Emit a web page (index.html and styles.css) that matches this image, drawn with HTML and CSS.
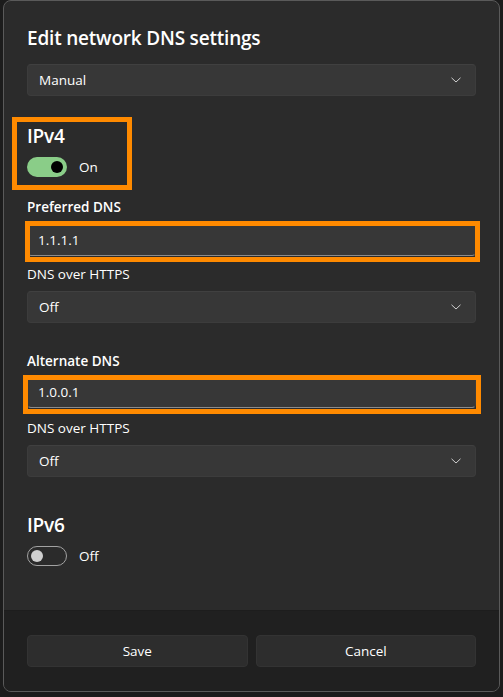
FILE: index.html
```html
<!DOCTYPE html>
<html lang="en">
<head>
<meta charset="utf-8">
<title>Edit network DNS settings</title>
<link rel="stylesheet" href="styles.css">
</head>
<body>
<div class="dialog">
  <div class="content">
    <h1 class="title">Edit network DNS settings</h1>
    <div class="select select-first"><span>Manual</span><svg class="chev" width="10" height="6" viewBox="0 0 10 6"><path d="M0.5 0.8 L5 5 L9.5 0.8" fill="none" stroke="#cfcfcf" stroke-width="1"/></svg></div>

    <h2 class="section section-v4">IPv4</h2>
    <div class="toggle-row"><span class="toggle on"><span class="knob"></span></span><span>On</span></div>

    <div class="label strong l-pref">Preferred DNS</div>
    <div class="input i-pref">1.1.1.1</div>
    <div class="label l-doh1">DNS over HTTPS</div>
    <div class="select s-doh1"><span>Off</span><svg class="chev" width="10" height="6" viewBox="0 0 10 6"><path d="M0.5 0.8 L5 5 L9.5 0.8" fill="none" stroke="#cfcfcf" stroke-width="1"/></svg></div>

    <div class="label strong l-alt">Alternate DNS</div>
    <div class="input i-alt">1.0.0.1</div>
    <div class="label l-doh2">DNS over HTTPS</div>
    <div class="select s-doh2"><span>Off</span><svg class="chev" width="10" height="6" viewBox="0 0 10 6"><path d="M0.5 0.8 L5 5 L9.5 0.8" fill="none" stroke="#cfcfcf" stroke-width="1"/></svg></div>

    <h2 class="section section-v6">IPv6</h2>
    <div class="toggle-row"><span class="toggle off"><span class="knob"></span></span><span>Off</span></div>
  </div>
  <div class="footer">
    <button class="btn">Save</button>
    <button class="btn">Cancel</button>
  </div>
  <div class="mark mark-v4"></div>
  <div class="mark mark-pref"></div>
  <div class="mark mark-alt"></div>
</div>
</body>
</html>
```
FILE: styles.css
```css
html, body {
  margin: 0;
  padding: 0;
}
body {
  width: 503px;
  height: 697px;
  overflow: hidden;
  background: #1c1c1c;
  font-family: "Open Sans", "Noto Sans", sans-serif;
  color: #ffffff;
}
.dialog {
  position: relative;
  box-sizing: border-box;
  margin-left: 3px;
  width: 497px;
  height: 692px;
  border: 1px solid #5a5a5a;
  border-radius: 8px;
  background: #2b2b2b;
  overflow: hidden;
  display: flex;
  flex-direction: column;
}
.content {
  flex: 1;
  padding: 23px 23px 0;
  display: flex;
  flex-direction: column;
}
.title {
  margin: 0;
  font-size: 19px;
  font-weight: 600;
  line-height: 28px;
  letter-spacing: -0.2px;
}
.select {
  box-sizing: border-box;
  height: 32px;
  background: #373737;
  border: 1px solid #3c3c3c;
  border-top-color: #404040;
  border-radius: 4px;
  padding: 0 14px 0 11px;
  display: flex;
  align-items: center;
  justify-content: space-between;
  font-size: 13.5px;
}
.select-first { margin-top: 12px; }
.s-doh1 { margin-top: 7px; }
.s-doh2 { margin-top: 7px; }
.chev { display: block; }
.section {
  margin: 0;
  font-size: 19px;
  font-weight: 600;
  line-height: 28px;
  letter-spacing: -0.2px;
}
.section-v4 { margin-top: 26px; }
.section-v6 { margin-top: 34px; }
.toggle-row {
  margin-top: 7px;
  height: 20px;
  display: flex;
  align-items: center;
  gap: 12px;
  font-size: 13.5px;
}
.toggle {
  box-sizing: border-box;
  width: 40px;
  height: 20px;
  border-radius: 10px;
  display: flex;
  align-items: center;
}
.toggle.on {
  background: #8acd88;
  justify-content: flex-end;
  padding: 0 4px;
}
.toggle.on .knob {
  width: 12px;
  height: 12px;
  border-radius: 50%;
  background: #000000;
}
.toggle.off {
  border: 1px solid #a2a2a2;
  padding: 0 3px;
}
.toggle.off .knob {
  width: 12px;
  height: 12px;
  border-radius: 50%;
  background: #cfcfcf;
}
.label {
  font-size: 13.5px;
  line-height: 20px;
}
.label.strong { font-weight: 600; }
.l-pref { margin-top: 20px; }
.l-doh1 { margin-top: 8px; }
.l-alt { margin-top: 28px; }
.l-doh2 { margin-top: 10px; }
.input {
  box-sizing: border-box;
  height: 32px;
  background: #373737;
  border: 1px solid #3c3c3c;
  border-bottom-color: #8c8c8c;
  border-radius: 4px;
  padding: 0 10px;
  display: flex;
  align-items: center;
  font-size: 13.5px;
}
.i-pref { margin-top: 7px; }
.i-alt { margin-top: 5px; }
.footer {
  background: #202020;
  border-top: 1px solid #1d1d1d;
  padding: 24px 23px 24px;
  display: grid;
  grid-template-columns: 1fr 1fr;
  gap: 8px;
}
.btn {
  height: 32px;
  margin: 0;
  background: #2d2d2d;
  border: 1px solid #333333;
  border-radius: 4px;
  color: #ffffff;
  font-family: "Open Sans", "Noto Sans", sans-serif;
  font-size: 13.5px;
  padding: 0;
}
.mark {
  position: absolute;
  box-sizing: border-box;
  border: 5px solid #ff8a00;
}
.mark-v4 { left: 8px; top: 116px; width: 120px; height: 73px; }
.mark-pref { left: 21px; top: 220px; width: 455px; height: 41px; }
.mark-alt { left: 19px; top: 374px; width: 458px; height: 39px; }
```
